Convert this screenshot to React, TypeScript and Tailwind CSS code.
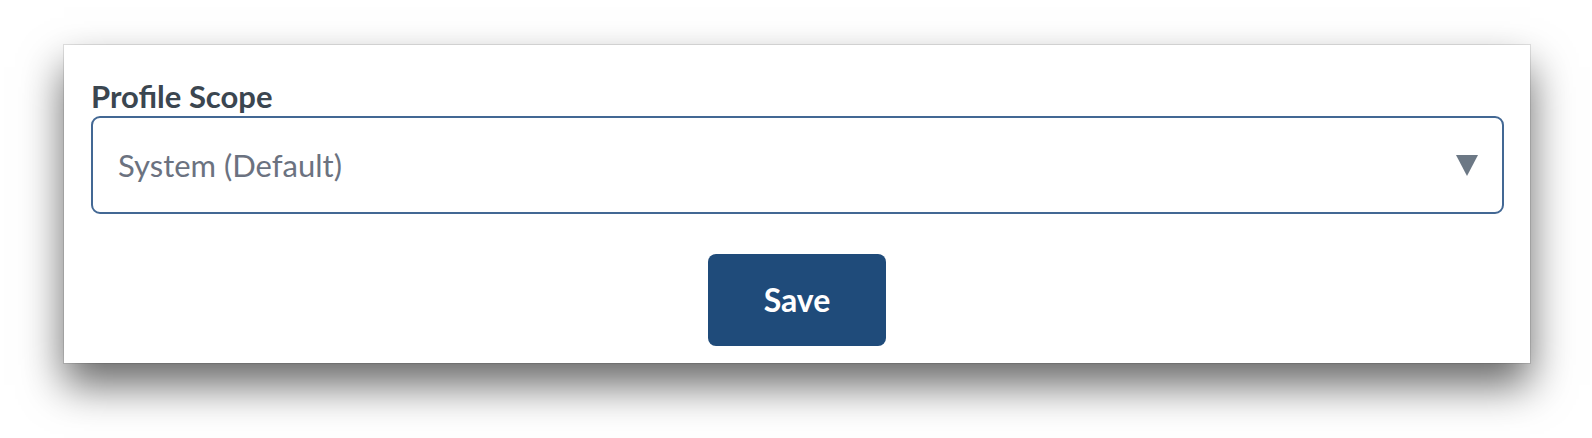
export default function App() {
  return (
    <div className="w-[1592px] h-[438px] bg-white pl-[64px] pt-[45px]" style={{ fontFamily: "Lato, 'Noto Sans', sans-serif" }}>
      <div className="w-[1466px] h-[318px] bg-white px-[27px] pt-[36px] flex flex-col shadow-[0_0_0_1px_rgba(0,0,0,0.1),0_22px_40px_rgba(0,0,0,0.6)]">
        <label className="text-[31px] leading-[31px] font-bold text-[#3b4650]">Profile Scope</label>
        <div className="mt-[4px] h-[98px] w-[1413px] rounded-[9px] border-2 border-[#436894] flex items-center justify-between pl-[25px] pr-[24px]">
          <span className="text-[31px] text-[#6b7280]">System (Default)</span>
          <svg width="22" height="21" viewBox="0 0 22 21">
            <polygon points="0,0 22,0 11,21" fill="#6c7885" />
          </svg>
        </div>
        <div className="flex justify-center mt-[40px]">
          <button className="w-[178px] h-[92px] rounded-[8px] bg-[#1f4b7a] text-white text-[32px] font-bold">Save</button>
        </div>
      </div>
    </div>
  )
}
